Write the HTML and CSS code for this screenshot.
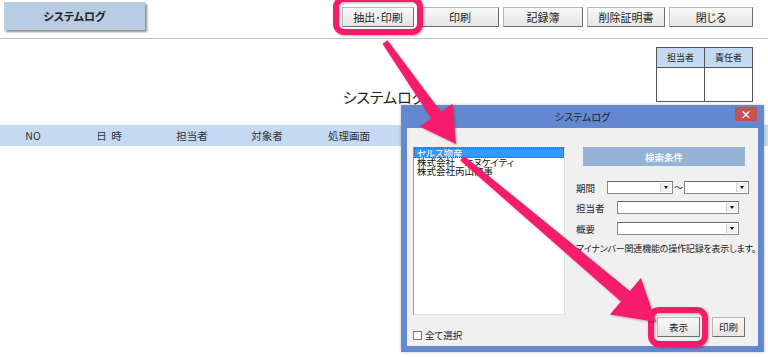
FILE: index.html
```html
<!DOCTYPE html>
<html lang="ja">
<head>
<meta charset="utf-8">
<title>システムログ</title>
<link rel="stylesheet" href="styles.css">
</head>
<body>
<div class="page">
  <header class="toolbar">
    <div class="tab">システムログ</div>
    <nav class="actions">
      <div class="btn b-extract">抽出･印刷</div>
      <div class="btn b-print">印刷</div>
      <div class="btn b-book">記録簿</div>
      <div class="btn b-cert">削除証明書</div>
      <div class="btn b-close">閉じる</div>
    </nav>
  </header>
  <section class="dochead">
    <div class="spacer"></div>
    <h1 class="title">システムログ</h1>
    <div class="stamp">
      <div class="stamp-h">担当者</div>
      <div class="stamp-h">責任者</div>
      <div class="stamp-c"></div>
      <div class="stamp-c"></div>
    </div>
  </section>
  <div class="colhead">
    <span>NO</span><span>日&nbsp;&nbsp;時</span><span>担当者</span><span>対象者</span><span>処理画面</span><span></span>
  </div>
</div>

<div class="dialog">
  <div class="titlebar">
    <span></span>
    <span class="dtitle">システムログ</span>
    <span class="xbtn">×</span>
  </div>
  <div class="dbody">
    <div class="leftcol">
      <ul class="listbox">
        <li class="sel">セルス物産</li>
        <li>株式会社　エヌケイティ</li>
        <li>株式会社丙山商事</li>
      </ul>
      <label class="chk"><span class="box"></span>全て選択</label>
    </div>
    <div class="rightcol">
      <div class="banner">検索条件</div>
      <div class="frow r1">
        <span class="lbl l-short">期間</span>
        <span class="combo c-half"><span class="drop"></span></span>
        <span class="tilde">～</span>
        <span class="combo c-half2"><span class="drop"></span></span>
      </div>
      <div class="frow r2">
        <span class="lbl">担当者</span>
        <span class="combo c-wide"><span class="drop"></span></span>
      </div>
      <div class="frow r3">
        <span class="lbl">概要</span>
        <span class="combo c-wide"><span class="drop"></span></span>
      </div>
      <p class="note">マイナンバー関連機能の操作記録を表示します。</p>
      <div class="dbtns">
        <div class="btn b-show">表示</div>
        <div class="btn b-dprint">印刷</div>
      </div>
    </div>
  </div>
</div>

<svg class="overlay" width="768" height="357" viewBox="0 0 768 357">
  <defs>
    <filter id="sh" x="-20%" y="-20%" width="140%" height="140%">
      <feDropShadow dx="1" dy="1" stdDeviation="1" flood-color="#000" flood-opacity="0.3"/>
    </filter>
  </defs>
  <g fill="none" stroke="#f51f6c" stroke-width="6" filter="url(#sh)">
    <rect x="336" y="-1" width="84" height="33" rx="8"/>
    <rect x="651" y="310" width="54" height="34" rx="8"/>
  </g>
  <g fill="#f51f6c" filter="url(#sh)">
    <polygon points="382.5,43.7 431.2,118.6 419.7,126.6 456,144 452.5,103.8 441,111.8 387.5,40.3"/>
    <polygon points="460.1,160.3 620.9,301.5 609.9,314.5 656,322 640.9,277.9 629.9,290.9 463.9,155.7"/>
  </g>
</svg>
</body>
</html>
```
FILE: styles.css
```css
* { box-sizing: border-box; margin: 0; padding: 0; }
html, body { width: 768px; height: 357px; overflow: hidden; }
body {
  position: relative;
  background: #fff;
  font-family: "Noto Sans CJK JP", "Noto Sans", sans-serif;
  font-feature-settings: "palt";
  color: #333;
}

/* top toolbar */
.toolbar {
  display: flex;
  align-items: flex-start;
  height: 39px;
  border-bottom: 1px solid #bdbdbd;
}
.tab {
  margin: 2px 0 0 4px;
  width: 141px;
  height: 28px;
  background: #b8cce4;
  box-shadow: 2px 2px 2px rgba(0, 0, 0, 0.45);
  font-size: 11px;
  font-weight: bold;
  color: #222;
  display: flex;
  align-items: center;
  justify-content: center;
}
.actions {
  margin: 7px 15px 0 auto;
  display: flex;
  gap: 4px;
}
.btn {
  flex: none;
  height: 20px;
  font-size: 11px;
  color: #222;
  background: linear-gradient(#f8f8f8, #e5e5e5);
  border: 1px solid #b8b8b8;
  border-right-color: #6e6e6e;
  border-bottom-color: #6e6e6e;
  display: flex;
  align-items: center;
  justify-content: center;
}
.b-extract { width: 72px; margin-right: 3px; }
.b-print { width: 78px; }
.b-book { width: 80px; }
.b-cert { width: 78px; }
.b-close { width: 84px; }

/* document head */
.dochead {
  height: 86px;
  display: grid;
  grid-template-columns: 1fr auto 1fr;
}
.title {
  align-self: end;
  margin-bottom: 19px;
  font-size: 15px;
  font-weight: normal;
  line-height: 18px;
  color: #222;
}
.stamp {
  justify-self: end;
  align-self: start;
  margin: 8px 15px 0 0;
  width: 97px;
  height: 55px;
  display: grid;
  grid-template-columns: 1fr 1fr;
  grid-template-rows: 19px 1fr;
  border: 1px solid #555;
  background: #555;
  gap: 1px;
}
.stamp-h {
  background: #c5d9f1;
  font-size: 9px;
  display: flex;
  align-items: center;
  justify-content: center;
  color: #222;
}
.stamp-c { background: #fff; }

/* column header band */
.colhead {
  height: 21px;
  background: #c5d9f1;
  display: grid;
  grid-template-columns: 66px 86px 80px 70px 94px 1fr;
  font-size: 10.5px;
  line-height: 21px;
  color: #333;
  text-align: center;
}

/* dialog window */
.dialog {
  position: absolute;
  left: 401px;
  top: 105px;
  width: 363px;
  height: 247px;
  background: #6488d0;
  padding: 0 6px 6px;
  display: flex;
  flex-direction: column;
  box-shadow: 0 0 3px rgba(0, 0, 0, 0.25);
}
.titlebar {
  height: 23px;
  display: grid;
  grid-template-columns: 1fr auto 1fr;
  align-items: start;
}
.dtitle {
  font-size: 10px;
  line-height: 23px;
  color: #222;
}
.xbtn {
  justify-self: end;
  margin-top: 2px;
  margin-right: 1px;
  width: 22px;
  height: 14px;
  background: #c75050;
  color: #fff;
  font-size: 11px;
  font-weight: bold;
  line-height: 14px;
  text-align: center;
}
.dbody {
  flex: 1;
  background: #f0f0f0;
  display: flex;
}
.leftcol {
  flex: none;
  margin-left: 6px;
  padding-top: 19px;
  width: 152px;
}
.listbox {
  list-style: none;
  height: 168px;
  background: #fff;
  border: 1px solid #e2e2e2;
  border-top-color: #7a7a7a;
  border-left-color: #9a9a9a;
  font-size: 9.5px;
  line-height: 9px;
  color: #111;
}
.listbox li { padding-left: 3px; height: 9px; white-space: nowrap; }
.listbox li.sel {
  height: 10px;
  line-height: 10px;
  background: #3399ff;
  color: #fff;
  outline: 1px dotted #7a5a2a;
  outline-offset: -1px;
}
.chk {
  margin-top: 13px;
  display: flex;
  align-items: center;
  gap: 3px;
  font-size: 9.5px;
  color: #222;
}
.box {
  width: 9px;
  height: 9px;
  background: #fff;
  border: 1px solid #777;
}
.rightcol {
  margin-left: 11px;
  flex: 1;
  min-width: 0;
  display: flex;
  flex-direction: column;
}
.banner {
  margin: 19px 0 0 7px;
  width: 162px;
  height: 19px;
  background: #95b3d7;
  color: #f4f7fb;
  font-size: 9.5px;
  font-weight: bold;
  display: flex;
  align-items: center;
  justify-content: center;
}
.frow {
  display: flex;
  align-items: center;
  height: 13px;
  font-size: 9.5px;
  color: #222;
}
.r1 { margin-top: 15px; }
.r2 { margin-top: 7px; }
.r3 { margin-top: 8px; }
.lbl { flex: none; width: 41px; }
.l-short { width: 31px; }
.tilde { flex: none; width: 11px; text-align: center; font-size: 9px; }
.combo {
  flex: none;
  height: 13px;
  background: #fff;
  border: 1px solid #8a8a8a;
  border-top-color: #6a6a6a;
  display: flex;
  justify-content: flex-end;
  padding: 1px;
}
.c-half { width: 66px; }
.c-half2 { width: 65px; }
.c-wide { width: 122px; }
.drop {
  width: 11px;
  height: 9px;
  background: #f0f0f0;
  border-left: 1px solid #d0d0d0;
  display: flex;
  align-items: center;
  justify-content: center;
}
.drop::after {
  content: "";
  border-left: 2.5px solid transparent;
  border-right: 2.5px solid transparent;
  border-top: 3px solid #111;
}
.note {
  margin-top: 8px;
  font-size: 9px;
  line-height: 12px;
  letter-spacing: -0.2px;
  color: #222;
  white-space: nowrap;
}
.dbtns {
  margin-top: auto;
  margin-bottom: 9px;
  margin-right: 13px;
  display: flex;
  justify-content: flex-end;
  gap: 12px;
}
.b-show { width: 43px; font-size: 9.5px; }
.b-dprint { width: 33px; font-size: 9.5px; }

/* annotation overlay */
.overlay {
  position: absolute;
  left: 0;
  top: 0;
  pointer-events: none;
}
```
